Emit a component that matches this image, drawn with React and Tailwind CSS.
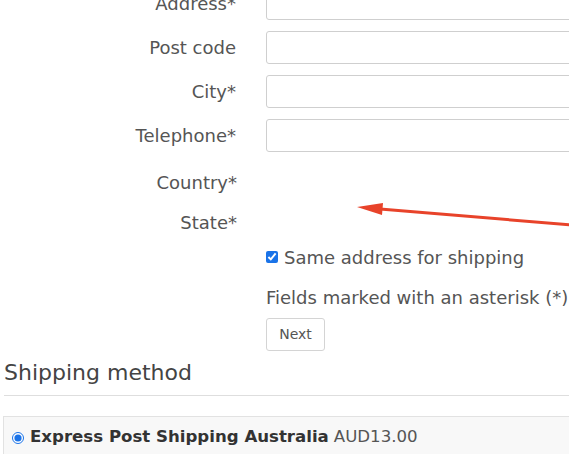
import React from 'react'

const fields = [
       { label: 'Address*', input: true },
       { label: 'Post code', input: true },
       { label: 'City*', input: true },
       { label: 'Telephone*', input: true },
]

const Row = ({ label, input }) => (
       <div className="flex items-center h-[33px] mb-[11px]">
              <label className="w-[237px] shrink-0 text-right pr-[1px]">{label}</label>
              {input && (
                     <input className="ml-[29px] w-[320px] shrink-0 h-[33px] border border-[#cfcfcf] rounded-[3px] bg-white outline-none" />
              )}
       </div>
)

const App = () => {
       return (
              <div className="relative w-[569px] h-[454px] overflow-hidden bg-white text-[#555] text-[18px]" style={{ fontFamily: '"DejaVu Sans", "Open Sans", sans-serif' }}>
                     <div className="mt-[-13px]">
                            {fields.map((f) => (
                                   <Row key={f.label} {...f} />
                            ))}

                            {/* Country / State */}
                            <div className="flex items-center h-[38px] mt-[1px]">
                                   <label className="w-[237px] shrink-0 text-right">Country*</label>
                            </div>
                            <div className="flex items-center h-[38px] mt-[2px]">
                                   <label className="w-[237px] shrink-0 text-right">State*</label>
                            </div>

                            <div className="pl-[266px] whitespace-nowrap">
                                   <div className="flex items-center h-[30px] mt-[1px]">
                                          <input type="checkbox" defaultChecked className="w-[12px] h-[12px] mr-[6px] accent-[#1a73e8]" />
                                          <span>Same address for shipping</span>
                                   </div>
                                   <div className="flex items-center h-[30px] mt-[10px]">
                                          <span>Fields marked with an asterisk (*) are required</span>
                                   </div>
                                   <div className="mt-[6px]">
                                          <button className="h-[33px] w-[59px] border border-[#d4d4d4] rounded-[3px] text-[14px] text-[#555] bg-white">Next</button>
                                   </div>
                            </div>

                            <div className="px-[4px]">
                                   <h3 className="text-[22px] text-[#444] h-[32px] leading-[32px] mt-[6px]">Shipping method</h3>
                                   <div className="border-b border-[#dedede] mt-[6px] w-[600px]" />
                            </div>

                            <div className="ml-[3px] mt-[20px] w-[600px] border border-[#e2e2e2] bg-[#f8f8f8] h-[60px]">
                                   <div className="flex items-center h-[41px] pl-[8px] whitespace-nowrap text-[#333] text-[16.6px]">
                                          <input type="radio" defaultChecked className="w-[12px] h-[12px] mr-[6px] accent-[#1a73e8]" />
                                          <span className="font-bold">Express Post Shipping Australia</span>
                                          <span className="ml-[5px] text-[#555]">AUD13.00</span>
                                   </div>
                            </div>
                     </div>

                     {/* annotation arrow */}
                     <svg className="absolute left-0 top-0 pointer-events-none" width="569" height="454" viewBox="0 0 569 454">
                            <line x1="380" y1="209" x2="572" y2="225" stroke="#e8432a" strokeWidth="3" />
                            <polygon points="357,207 383,203 382,215" fill="#e8432a" />
                     </svg>
              </div>
       )
}

export default App
